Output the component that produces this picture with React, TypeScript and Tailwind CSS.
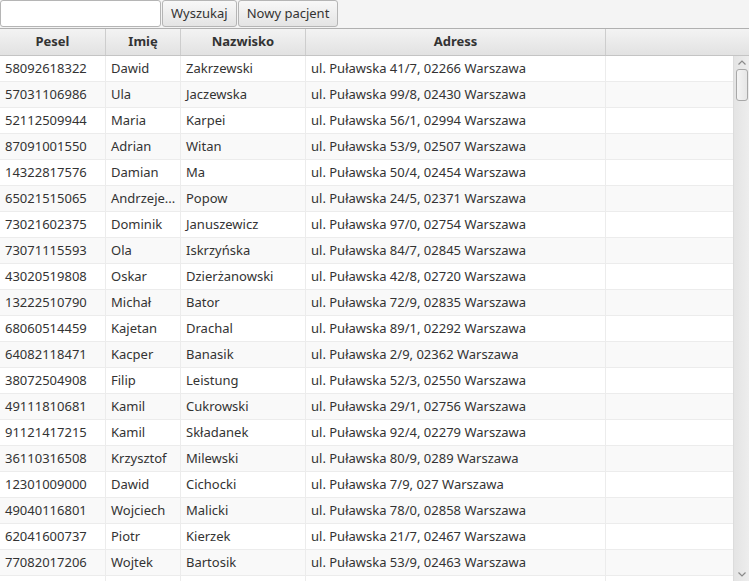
import React from 'react';

const rows: [string, string, string, string][] = [
  ['58092618322', 'Dawid', 'Zakrzewski', 'ul. Puławska 41/7, 02266 Warszawa'],
  ['57031106986', 'Ula', 'Jaczewska', 'ul. Puławska 99/8, 02430 Warszawa'],
  ['52112509944', 'Maria', 'Karpei', 'ul. Puławska 56/1, 02994 Warszawa'],
  ['87091001550', 'Adrian', 'Witan', 'ul. Puławska 53/9, 02507 Warszawa'],
  ['14322817576', 'Damian', 'Ma', 'ul. Puławska 50/4, 02454 Warszawa'],
  ['65021515065', 'Andrzeje...', 'Popow', 'ul. Puławska 24/5, 02371 Warszawa'],
  ['73021602375', 'Dominik', 'Januszewicz', 'ul. Puławska 97/0, 02754 Warszawa'],
  ['73071115593', 'Ola', 'Iskrzyńska', 'ul. Puławska 84/7, 02845 Warszawa'],
  ['43020519808', 'Oskar', 'Dzierżanowski', 'ul. Puławska 42/8, 02720 Warszawa'],
  ['13222510790', 'Michał', 'Bator', 'ul. Puławska 72/9, 02835 Warszawa'],
  ['68060514459', 'Kajetan', 'Drachal', 'ul. Puławska 89/1, 02292 Warszawa'],
  ['64082118471', 'Kacper', 'Banasik', 'ul. Puławska 2/9, 02362 Warszawa'],
  ['38072504908', 'Filip', 'Leistung', 'ul. Puławska 52/3, 02550 Warszawa'],
  ['49111810681', 'Kamil', 'Cukrowski', 'ul. Puławska 29/1, 02756 Warszawa'],
  ['91121417215', 'Kamil', 'Składanek', 'ul. Puławska 92/4, 02279 Warszawa'],
  ['36110316508', 'Krzysztof', 'Milewski', 'ul. Puławska 80/9, 0289 Warszawa'],
  ['12301009000', 'Dawid', 'Cichocki', 'ul. Puławska 7/9, 027 Warszawa'],
  ['49040116801', 'Wojciech', 'Malicki', 'ul. Puławska 78/0, 02858 Warszawa'],
  ['62041600737', 'Piotr', 'Kierzek', 'ul. Puławska 21/7, 02467 Warszawa'],
  ['77082017206', 'Wojtek', 'Bartosik', 'ul. Puławska 53/9, 02463 Warszawa'],
  ['', '', '', ''],
];

const btn =
  'h-[27px] px-[8px] rounded-[3px] border border-[#b5b5b5] bg-gradient-to-b from-[#f8f8f8] to-[#e4e4e4] text-[13px] text-[#333]';

const cell = 'flex items-center pl-[5px] border-r border-[#ececec] whitespace-nowrap overflow-hidden';
const head = 'flex items-center justify-center border-r border-[#cdcdcd]';

export default function App() {
  return (
    <div
      className="w-[749px] h-[581px] overflow-hidden bg-[#f4f4f4] text-[#333] flex flex-col"
      style={{ fontFamily: '"Noto Sans", "Open Sans", sans-serif' }}
    >
      {/* Toolbar */}
      <div className="flex h-[28px] gap-px shrink-0">
        <input className="w-[161px] h-[27px] rounded-[3px] border border-[#b5b5b5] bg-white outline-none px-1 text-[13px]" />
        <button className={btn}>Wyszukaj</button>
        <button className={btn}>Nowy pacjent</button>
      </div>

      {/* Table */}
      <div className="flex-1 flex flex-col border-t border-[#b0b0b0] bg-white min-h-0">
        <div className="flex h-[27px] shrink-0 bg-gradient-to-b from-[#f3f3f3] to-[#e2e2e2] border-b border-[#c4c4c4] text-[13px] font-bold">
          <div className={`w-[106px] ${head}`}>Pesel</div>
          <div className={`w-[75px] ${head}`}>Imię</div>
          <div className={`w-[125px] ${head}`}>Nazwisko</div>
          <div className={`w-[300px] ${head}`}>Adress</div>
          <div className="flex-1" />
        </div>

        <div className="flex-1 flex min-h-0">
          <div className="flex-1 flex flex-col">
            {rows.map((r, i) => (
              <div
                key={i}
                className={`flex h-[26px] shrink-0 border-b border-[#ececec] text-[13px] ${i % 2 === 0 ? 'bg-white' : 'bg-[#f9f9f9]'}`}
              >
                <div className={`w-[106px] ${cell}`}>{r[0]}</div>
                <div className={`w-[75px] ${cell}`}>{r[1]}</div>
                <div className={`w-[125px] ${cell}`}>{r[2]}</div>
                <div className={`w-[300px] ${cell}`}>{r[3]}</div>
                <div className="flex-1" />
              </div>
            ))}
          </div>

          {/* Scrollbar */}
          <div className="w-[16px] shrink-0 flex flex-col items-center bg-gradient-to-r from-[#e4e4e4] to-[#ededed] border-l border-[#dcdcdc]">
            <svg width="10" height="12" viewBox="0 0 10 12" className="mt-[1px]">
              <path d="M1.5 7.5 L5 4 L8.5 7.5" fill="none" stroke="#8a8a8a" strokeWidth="1.2" />
            </svg>
            <div className="w-[12px] h-[32px] rounded-[3px] border border-[#a8a8a8] bg-gradient-to-r from-[#f4f4f4] to-[#e6e6e6]" />
            <div className="flex-1" />
            <svg width="10" height="12" viewBox="0 0 10 12" className="mb-[1px]">
              <path d="M1.5 4.5 L5 8 L8.5 4.5" fill="none" stroke="#8a8a8a" strokeWidth="1.2" />
            </svg>
          </div>
        </div>
      </div>
    </div>
  );
}
